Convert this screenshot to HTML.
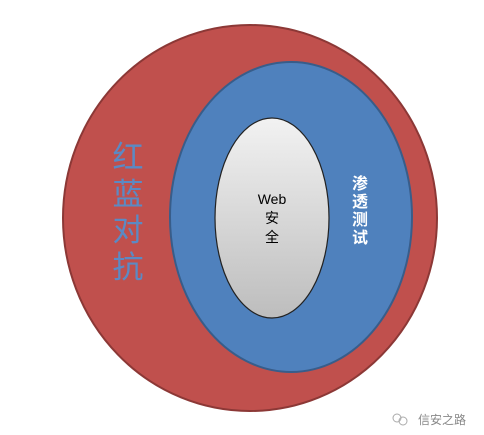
<!DOCTYPE html>
<html><head><meta charset="utf-8"><style>
body{margin:0;width:484px;height:435px;background:#fff;overflow:hidden;position:relative;font-family:"Liberation Sans","Noto Sans CJK SC",sans-serif}
.t{position:absolute;text-align:center}
</style></head><body>
<svg width="484" height="435" style="position:absolute;left:0;top:0">
<defs><linearGradient id="g" x1="0" y1="0" x2="0" y2="1"><stop offset="0" stop-color="#f2f2f2"/><stop offset="1" stop-color="#bdbdbd"/></linearGradient></defs>
<ellipse cx="250" cy="218" rx="187" ry="193" fill="#c0504d" stroke="#8c3836" stroke-width="2"/>
<ellipse cx="291" cy="217" rx="121" ry="155" fill="#4f81bd" stroke="#385d8a" stroke-width="2"/>
<ellipse cx="272" cy="218" rx="57" ry="100" fill="url(#g)" stroke="#222" stroke-width="1.2"/>
<g fill="none" stroke="#aaa" stroke-width="1"><circle cx="397" cy="418" r="4"/><circle cx="403" cy="421" r="4"/></g>
</svg>
<div class="t" style="left:108px;top:140px;width:40px;font-size:31px;line-height:36.5px;color:#5b8ac4">红<br>蓝<br>对<br>抗</div>
<div class="t" style="left:350px;top:176px;width:20px;font-size:16px;line-height:18px;color:#fff;font-weight:bold">渗<br>透<br>测<br>试</div>
<div class="t" style="left:242px;top:190px;width:60px;font-size:14px;line-height:19px;color:#000">Web<br>安<br>全</div>
<div class="t" style="left:418px;top:411px;font-size:12px;color:#888">信安之路</div>
</body></html>
